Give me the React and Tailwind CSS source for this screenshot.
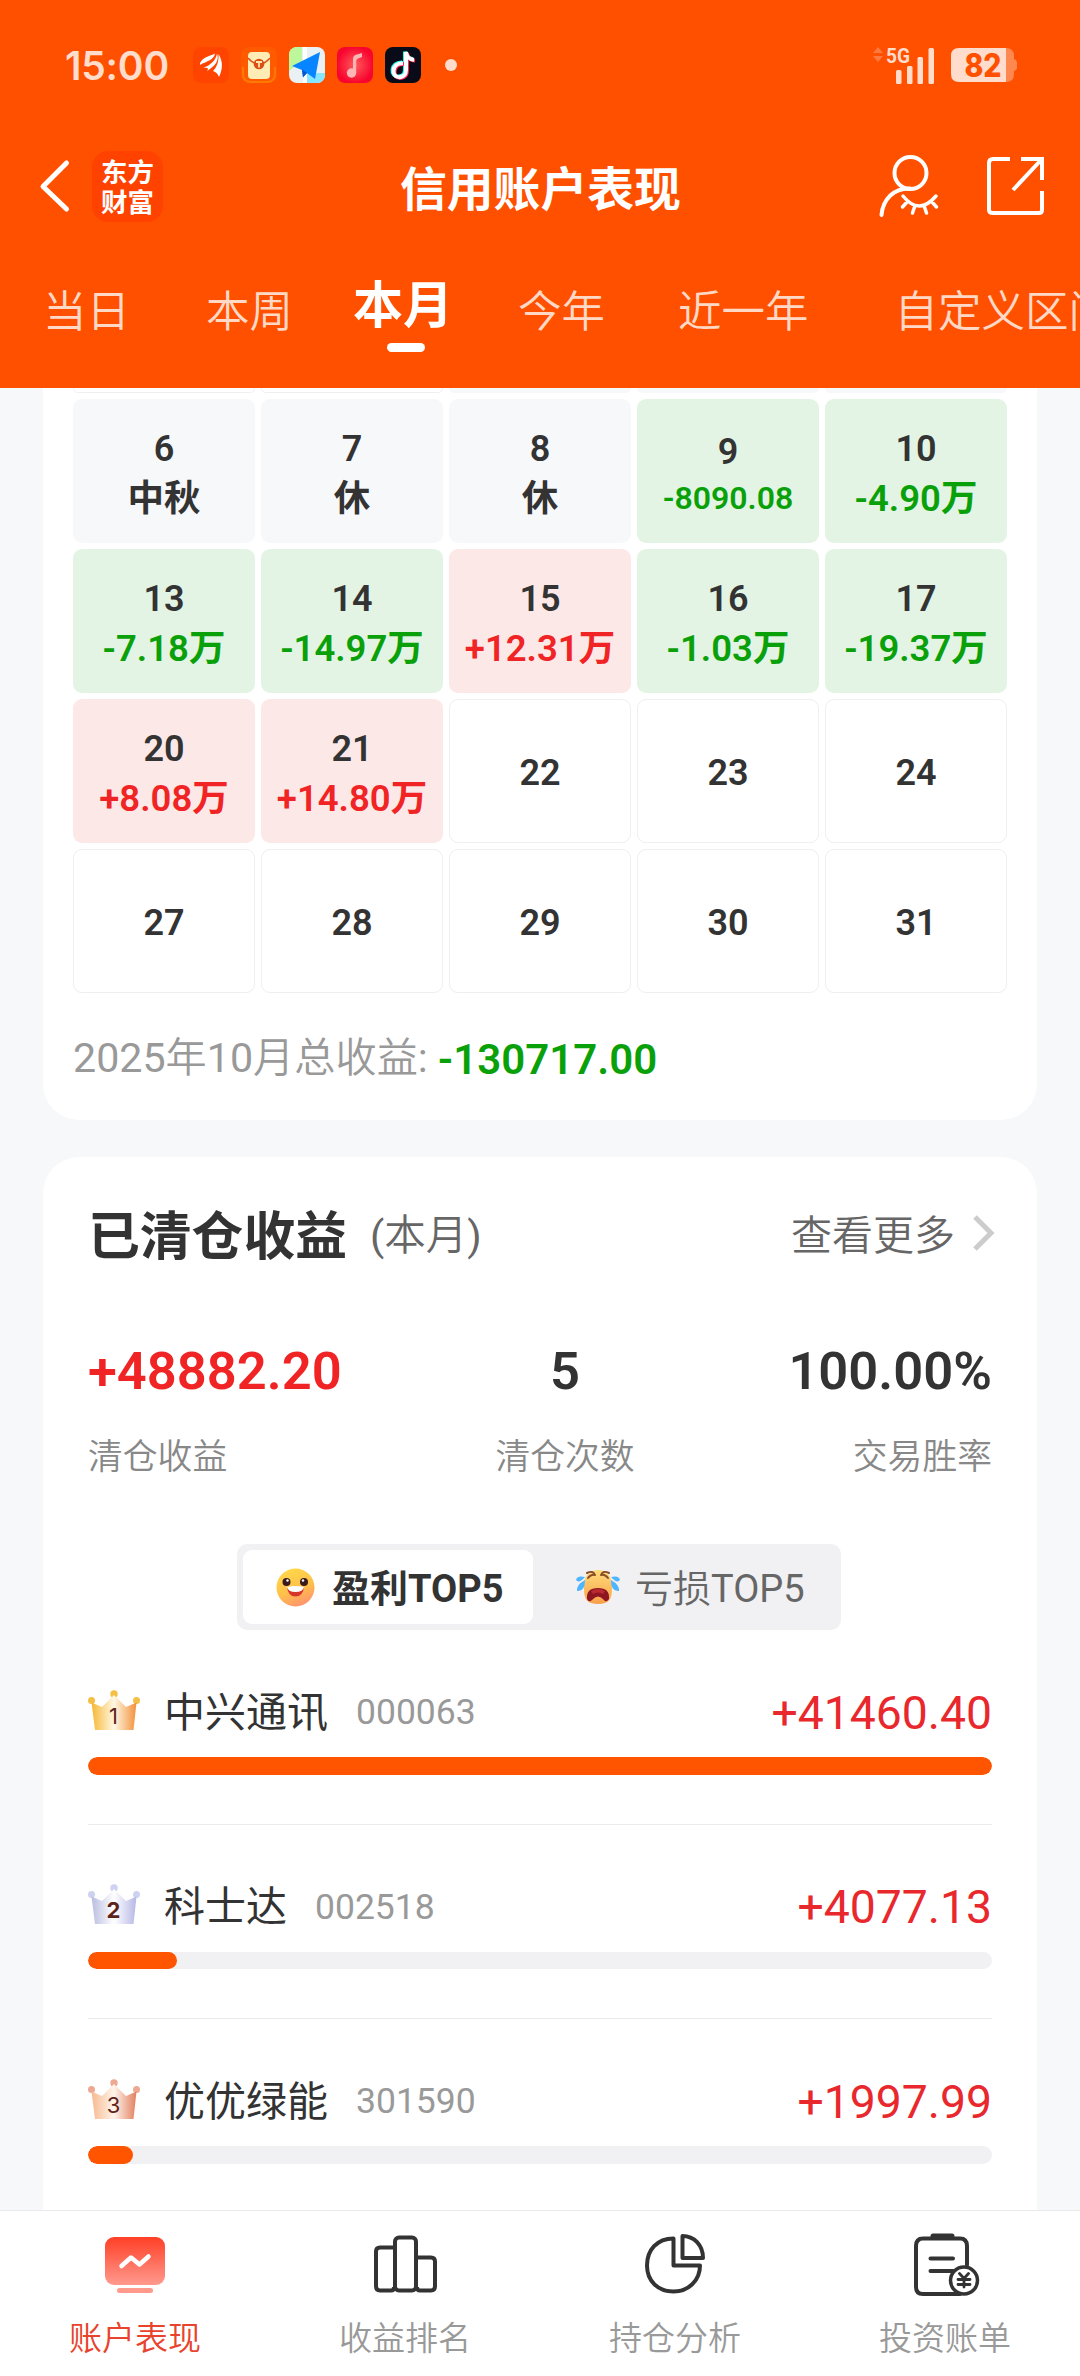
const FONT = "font-['Roboto','Noto_Sans_CJK_SC',sans-serif]";

const plain = "bg-[#f7f8fa] text-[#333]";
const green = "bg-[#e3f4e5] text-[#0aa00a]";
const red = "bg-[#fde8e8] text-[#f02424]";
const empty = "bg-white border border-[#efefef] text-[#333]";

const days = [
  { d: "6", v: "中秋", c: plain },
  { d: "7", v: "休", c: plain },
  { d: "8", v: "休", c: plain },
  { d: "9", v: "-8090.08", c: green, small: true },
  { d: "10", v: "-4.90万", c: green },
  { d: "13", v: "-7.18万", c: green },
  { d: "14", v: "-14.97万", c: green },
  { d: "15", v: "+12.31万", c: red },
  { d: "16", v: "-1.03万", c: green },
  { d: "17", v: "-19.37万", c: green },
  { d: "20", v: "+8.08万", c: red },
  { d: "21", v: "+14.80万", c: red },
  ...["22", "23", "24", "27", "28", "29", "30", "31"].map((d) => ({ d, c: empty })),
];

function DayCell({ day }) {
  return (
    <div className={`flex h-[144px] flex-col items-center justify-center rounded-[9px] font-semibold ${day.small ? "pt-[2px]" : "pt-[5px]"} ${day.c}`}>
      <span className={`text-[36px] text-[#333] ${day.small ? "mt-[5px] leading-[46px]" : "leading-[49px]"}`}>{day.d}</span>
      {day.v && (
        <span className={`whitespace-nowrap ${day.small ? "text-[32px] leading-[46px]" : "text-[36.500px] leading-[49px]"}`}>{day.v}</span>
      )}
    </div>
  );
}

function StatusBar() {
  return (
    <div className="flex h-[130px] items-center pl-[65px] pr-[63px]">
      <span className="w-[128px] font-['Inter',sans-serif] text-[39px] leading-none font-semibold tracking-[-0.2px] text-[#ffdccb]">15:00</span>
      <div className="flex items-center gap-[12px]">
        <svg width="36" height="36" viewBox="0 0 36 36">
          <rect width="36" height="36" rx="8" fill="#ff4400" />
          <g fill="#fff">
            <path d="M7 16C10 10 17 9 22 6.500C21 13 14 14 7 18Z" />
            <path d="M10 21C18 18 23 13 24 6.500C27 15 20 20 14 24C16 21 15 20 10 21Z" />
            <path d="M20 24C24 20 26 14 25.500 7C30 14 30 22 26 30C25 27 23 25 20 24Z" />
          </g>
        </svg>
        <svg width="36" height="36" viewBox="0 0 36 36">
          <rect width="36" height="36" rx="8" fill="#ff5a00" />
          <path d="M2 20V27Q2 34 9 35H27Q34 34 34 27V20" fill="none" stroke="#ff7a00" strokeWidth="2" />
          <rect x="7" y="5" width="22" height="27" rx="4" fill="#ffedb5" />
          <path d="M7 11Q12 17 18 17Q24 17 29 11" fill="none" stroke="#d9541a" strokeWidth="1.500" />
          <circle cx="18" cy="17" r="5.300" fill="#dd4e14" />
          <path d="M15 15H21M18 15V20.500" stroke="#ffe6a8" strokeWidth="1.800" />
        </svg>
        <svg width="36" height="36" viewBox="0 0 36 36">
          <clipPath id="mapclip"><rect width="36" height="36" rx="8" /></clipPath>
          <g clipPath="url(#mapclip)">
            <rect width="36" height="36" fill="#e9f1f4" />
            <path d="M0 0H13V14L0 24Z" fill="#bdf79c" />
            <path d="M16 0V36" stroke="#fff" strokeWidth="4" />
            <path d="M18 26H36V36H18Z" fill="#86e6ff" />
            <path d="M3 19L31 5L26 32L18 26L14 30L13 23Z" fill="#0784ff" />
            <path d="M13 22.500L18 26L14 30.500Z" fill="#0657c8" />
          </g>
        </svg>
        <svg width="36" height="36" viewBox="0 0 36 36">
          <defs>
            <radialGradient id="music"><stop stopColor="#ff5c5c" /><stop offset="1" stopColor="#f8052f" /></radialGradient>
          </defs>
          <rect width="36" height="36" rx="8" fill="url(#music)" />
          <g fill="#ffb5b5">
            <circle cx="14.500" cy="26" r="4.700" />
            <path d="M16 25V12Q16 8 20 7.500L25 6V10L21 11.500Q19.200 12 19.200 14V26Z" />
          </g>
        </svg>
        <svg width="36" height="36" viewBox="0 0 36 36">
          <rect width="36" height="36" rx="8" fill="#090b18" />
          <g fill="none" strokeWidth="4">
            <path d="M17 15.500C5 15 5 30 13.500 29.500C19 29 20 26 20 22V4.500C20.500 9 24 12 28 12" stroke="#25f4ee" />
            <path d="M19 17C7 16.500 7 31.500 15.500 31C21 30.500 22 27.500 22 23.500V6C22.500 10.500 26 13.500 30 13.500" stroke="#fe2c55" />
            <path d="M18 16.200C6 15.700 6 30.700 14.500 30.200C20 29.700 21 26.700 21 22.700V5C21.500 9.700 25 12.700 29 12.700" stroke="#fff" />
          </g>
        </svg>
      </div>
      <span className="ml-[24px] size-[12px] rounded-full bg-[#ffdccb]" />
      <svg className="ml-auto overflow-visible" width="62" height="38" viewBox="0 0 62 38">
        <path d="M0 7L5 1L10 7ZM0 10L5 16L10 10Z" fill="#ff7a40" />
        <text x="13" y="17" fill="#ffdccb" fontSize="21" fontWeight="700" fontFamily="Roboto" textLength="24" lengthAdjust="spacingAndGlyphs">5G</text>
        <g fill="#ffdccb">
          <rect x="23" y="24" width="5.500" height="14" rx="1.500" />
          <rect x="34" y="20" width="5.500" height="18" rx="1.500" />
          <rect x="44.500" y="11" width="5.500" height="27" rx="1.500" />
          <rect x="55.500" y="2" width="5.500" height="36" rx="1.500" />
        </g>
      </svg>
      <svg className="ml-[16px] overflow-visible" width="66" height="34" viewBox="0 0 66 34">
        <path d="M55 0Q63 0 63 8V11Q66 12 66 15V20Q66 22 63 23V26Q63 34 55 34Z" fill="#ff8850" />
        <path d="M8 0H55V34H8Q0 34 0 26V8Q0 0 8 0Z" fill="#ffdccb" />
        <text x="13.500" y="29" fill="#ff5000" fontSize="32" fontWeight="800" fontFamily="Inter" textLength="37" lengthAdjust="spacingAndGlyphs">82</text>
      </svg>
    </div>
  );
}

function TitleBar() {
  return (
    <div className="flex h-[112px] items-center pl-[38px] pr-[34px]">
      <svg width="34" height="54" viewBox="0 0 34 54" fill="none" stroke="#fff" strokeWidth="5" strokeLinecap="round" strokeLinejoin="round">
        <path d="M28.500 4L5 27.500L28.500 50" />
      </svg>
      <div className="ml-[20px] flex size-[71px] flex-col items-center justify-center rounded-[16px] bg-[#ff4200] font-['Noto_Sans_CJK_SC',sans-serif] text-[26.500px] leading-[30px] font-bold text-white">
        <span>东方</span>
        <span>财富</span>
      </div>
      <h1 className="ml-[237px] pt-[8px] text-[46.800px] leading-none font-bold text-white">信用账户表现</h1>
      <svg className="ml-auto" width="62" height="64" viewBox="0 0 62 64" fill="none" stroke="#fff" strokeWidth="4" strokeLinecap="round">
        <circle cx="32.500" cy="19" r="16" />
        <path d="M3.500 61C5 45 16 34 32 34.500" />
        <path d="M25 42Q41 62 58 42M29 48L24.500 53M36.500 53L34.500 59M46.500 53L48.500 59M54 48L58.500 53" strokeWidth="3.500" />
      </svg>
      <svg className="ml-[46px]" width="60" height="60" viewBox="0 0 60 60" fill="none" stroke="#fff" strokeWidth="4">
        <path d="M24 3H7Q3 3 3 7V54Q3 57 7 57H53Q56 57 56 54V35M35 3H56V24M56 3L27 34" />
      </svg>
    </div>
  );
}

const tabBase = "shrink-0 text-[43.500px] leading-[60px] text-[#ffd9c6] font-[350]";

function Tabs() {
  return (
    <div className="flex h-[146px] items-start overflow-hidden pt-[41px] pl-[43px] whitespace-nowrap">
      <span className={tabBase}>当日</span>
      <span className={`${tabBase} ml-[76px]`}>本周</span>
      <div className="-mt-[7px] ml-[60px] flex shrink-0 flex-col items-center">
        <span className="text-[50px] leading-[60px] font-bold text-white">本月</span>
        <span className="mt-[7px] ml-[6px] h-[9px] w-[38px] rounded-full bg-white" />
      </div>
      <span className={`${tabBase} ml-[65px]`}>今年</span>
      <span className={`${tabBase} ml-[73px]`}>近一年</span>
      <span className={`${tabBase} ml-[86px]`}>自定义区间</span>
    </div>
  );
}

function Calendar() {
  return (
    <section className="rounded-b-[36px] bg-white px-[30px] pb-[35px]">
      <div className="mb-[6px] grid grid-cols-5 gap-x-[6px]">
        <div className="h-[5px] rounded-b-[9px] border border-t-0 border-[#efefef]" />
        <div className="h-[5px] rounded-b-[9px] border border-t-0 border-[#efefef]" />
        <div className="h-[5px] rounded-b-[9px] bg-[#f7f8fa]" />
        <div className="h-[5px] rounded-b-[9px] bg-[#f7f8fa]" />
        <div className="h-[5px] rounded-b-[9px] bg-[#f7f8fa]" />
      </div>
      <div className="grid grid-cols-5 gap-[6px]">
        {days.map((day) => (
          <DayCell key={day.d} day={day} />
        ))}
      </div>
      <p className="mt-[41px] mb-[1px] flex h-[50px] items-center text-[41.200px] whitespace-nowrap text-[#999]">
        <span>2025</span>
        <span className="font-[350]">年</span>
        <span>10</span>
        <span className="font-[350]">月总收益</span>
        <span>:</span>
        <b className="ml-[10px] text-[42px] font-semibold text-[#0aa00a]">-130717.00</b>
      </p>
    </section>
  );
}

function Happy() {
  return (
    <svg width="39" height="39" viewBox="0 0 39 39">
      <defs>
        <linearGradient id="happy" x1="0.300" y1="0" x2="0.700" y2="1"><stop stopColor="#ffd84a" /><stop offset="0.550" stopColor="#ffc04a" /><stop offset="1" stopColor="#ff9070" /></linearGradient>
      </defs>
      <circle cx="19.500" cy="19.500" r="19" fill="url(#happy)" />
      <circle cx="10.500" cy="14" r="4" fill="#3a1a1c" />
      <circle cx="28" cy="14" r="4" fill="#3a1a1c" />
      <circle cx="11.500" cy="12.500" r="1.200" fill="#fff" />
      <circle cx="27" cy="12.500" r="1.200" fill="#fff" />
      <path d="M11 19Q19.500 23 28 19Q27 28.500 19.500 28.500Q12 28.500 11 19Z" fill="#d8352a" />
      <path d="M11 19Q19.500 17 28 19Q27 24 19.500 24Q12 24 11 19Z" fill="#fff" />
    </svg>
  );
}

function Crying() {
  return (
    <svg width="44" height="36" viewBox="0 0 44 36">
      <defs>
        <linearGradient id="cry" x1="0" y1="0" x2="0" y2="1"><stop stopColor="#ffdc7a" /><stop offset="1" stopColor="#f8a04c" /></linearGradient>
      </defs>
      <path d="M22 1C32 1 37 9 36 20C36 30 33 35 22 35C11 35 8 30 8 20C7 9 12 1 22 1Z" fill="url(#cry)" />
      <path d="M11 4Q17 1 19 6M12 9Q15 5 19 6M33 4Q27 1 25 6M32 9Q29 5 25 6" fill="none" stroke="#8a4d28" strokeWidth="2" strokeLinecap="round" />
      <path d="M11 30Q10 19 22 19Q34 19 33 30Q30 34 28 31Q22 24 16 31Q13 34 11 30Z" fill="#8d1620" />
      <path d="M15 22Q22 18 29 22L27 25Q22 22 17 25Z" fill="#b92b30" />
      <g fill="#4fb5ff">
        <path d="M9 8Q1 6 0 11Q3 15 9 8Z" />
        <path d="M9 11Q0 16 1 22Q9 23 9 11Z" />
        <path d="M35 8Q43 6 44 11Q41 15 35 8Z" />
        <path d="M35 11Q44 16 43 22Q35 23 35 11Z" />
      </g>
    </svg>
  );
}

const crownStops = [
  ["#f7b733", "#fff8e4", "#f2903a", "#f5bf45"],
  ["#b9bde0", "#ffffff", "#b6b7e6", "#cdd2f2"],
  ["#f7b98f", "#fff4ec", "#e2805f", "#eda892"],
];

function Crown({ n }) {
  const [a, b, c, dot] = crownStops[n - 1];
  return (
    <svg className="-mt-[4px]" width="52" height="41" viewBox="0 0 52 41">
      <defs>
        <linearGradient id={`crown${n}`}><stop stopColor={a} /><stop offset="0.500" stopColor={b} /><stop offset="1" stopColor={c} /></linearGradient>
      </defs>
      <circle cx="26" cy="4" r="3.700" fill={dot} />
      <circle cx="3.500" cy="10.500" r="3.500" fill={dot} />
      <circle cx="48.500" cy="10.500" r="3.500" fill={dot} />
      <path d="M3.500 12.500L14 17L26 5L38 17L48.500 12.500L45.500 40H7Z" fill={`url(#crown${n})`} />
      <text x="25.500" y="34" textAnchor="middle" fill="#5d231b" fontFamily="Inter" fontSize="22" fontWeight={n === 2 ? 700 : 400}>{n}</text>
    </svg>
  );
}

const stocks = [
  { name: "中兴通讯", code: "000063", value: "+41460.40", pct: 100 },
  { name: "科士达", code: "002518", value: "+4077.13", pct: 9.85 },
  { name: "优优绿能", code: "301590", value: "+1997.99", pct: 5 },
];

function StockRow({ stock, n }) {
  return (
    <li className="h-[142.500px] border-b-[1.500px] border-[#ececee] last:border-0">
      <div className="flex h-[60px] items-center">
        <Crown n={n} />
        <span className="ml-[24px] pt-[1px] text-[41px] leading-[60px] text-[#333]">{stock.name}</span>
        <span className="ml-[28px] text-[35.500px] leading-[60px] text-[#999]">{stock.code}</span>
        <span className="ml-auto pt-[1px] text-[46.300px] leading-[60px] text-[#e8282c]">{stock.value}</span>
      </div>
      <div className="mt-[15px] h-[17.500px] overflow-hidden rounded-full bg-[#f1f1f3]">
        <div className="h-full rounded-full bg-[#ff5500]" style={{ width: `${stock.pct}%` }} />
      </div>
    </li>
  );
}

function Stat({ value, label, color, align }) {
  return (
    <div className={`flex flex-col ${align}`}>
      <span className={`text-[52.500px] leading-[60px] font-semibold ${color}`}>{value}</span>
      <span className="mt-[31px] text-[34.800px] leading-[50px] font-[350] text-[#888]">{label}</span>
    </div>
  );
}

function Cleared() {
  return (
    <section className="mt-[37px] h-[1100px] rounded-t-[36px] bg-white px-[45px] pt-[48px]">
      <div className="flex h-[60px] items-center">
        <h2 className="pt-[6px] text-[51.800px] leading-none font-bold text-[#333]">已清仓收益</h2>
        <span className="ml-[23px] pt-[2px] text-[41.500px] leading-none text-[#666]">
          (<span className="font-[350]">本月</span>)
        </span>
        <span className="ml-auto pt-[3px] text-[41px] leading-none font-[350] text-[#666]">查看更多</span>
        <svg className="mr-[-3px] ml-[17px] -mt-[4px]" width="23" height="38" viewBox="0 0 23 38" fill="none" stroke="#ccc" strokeWidth="5">
          <path d="M3 3L19 19L3 35" />
        </svg>
      </div>
      <div className="mt-[76px] grid grid-cols-[1fr_140px_1fr]">
        <Stat value="+48882.20" label="清仓收益" color="text-[#f02424]" align="items-start" />
        <div className="ml-[25px] w-[140px]">
          <Stat value="5" label="清仓次数" color="text-[#333]" align="items-center" />
        </div>
        <Stat value="100.00%" label="交易胜率" color="text-[#333]" align="items-end" />
      </div>
      <div className="mt-[62px] ml-[149px] flex h-[86px] w-[604px] items-center rounded-[10px] bg-[#f1f1f3] p-[6px]">
        <div className="flex h-[74px] w-[290px] items-center rounded-[9px] bg-white pl-[33px]">
          <Happy />
          <span className="ml-[17px] pt-[3px] text-[38px] leading-none font-bold text-[#333]">盈利TOP5</span>
        </div>
        <div className="flex items-center pl-[43px]">
          <Crying />
          <span className="ml-[15px] pt-[3px] text-[38px] leading-none text-[#666]">
            <span className="font-[350]">亏损</span>TOP5
          </span>
        </div>
      </div>
      <ul className="mt-[52px] flex flex-col gap-[52px]">
        {stocks.map((s, i) => (
          <StockRow key={s.code} stock={s} n={i + 1} />
        ))}
      </ul>
    </section>
  );
}

const navItems = [
  {
    label: "账户表现",
    active: true,
    icon: (
      <>
        <defs>
          <linearGradient id="nav" x1="0" y1="0" x2="0" y2="1"><stop stopColor="#ff3f26" /><stop offset="1" stopColor="#ff9a8e" /></linearGradient>
        </defs>
        <rect x="5" y="5" width="60" height="48" rx="9" fill="url(#nav)" />
        <rect x="17" y="56" width="36" height="5" rx="2.500" fill="#ff9a8c" />
        <path d="M21.500 34L31 25.500L39.500 32.500L48.500 24.500" fill="none" stroke="#fff" strokeWidth="4.500" strokeLinecap="round" strokeLinejoin="round" />
      </>
    ),
  },
  {
    label: "收益排名",
    icon: (
      <g fill="none" stroke="#333" strokeWidth="4">
        <path d="M24 15.500H10Q6 15.500 6 19.500V54Q6 58.500 10 58.500H21Q24 58.500 24 55" />
        <rect x="25" y="5.500" width="21" height="53" rx="4" />
        <path d="M47 25.500H61Q65 25.500 65 29.500V54Q65 58.500 61 58.500H50Q47 58.500 47 55" />
      </g>
    ),
  },
  {
    label: "持仓分析",
    icon: (
      <g fill="none" stroke="#333" strokeWidth="4" strokeLinejoin="round">
        <path d="M33.500 6.500C17 6.500 7 18 7 33.500C7 49 18 59.500 33.500 59.500C49 59.500 60 48 60 33.500H33.500Z" />
        <path d="M42.500 4V26H63C63 13 54 4 42.500 4Z" />
      </g>
    ),
  },
  {
    label: "投资账单",
    icon: (
      <g fill="none" stroke="#333" strokeWidth="4" strokeLinecap="round">
        <path d="M23 4H42" strokeWidth="5" />
        <path d="M57 33V14Q57 6.500 50 6.500H13Q6 6.500 6 14V55Q6 62 13 62H50M20.500 26.500H43M20.500 39H43" />
        <circle cx="54" cy="48.500" r="13.500" fill="#fff" strokeWidth="3.500" />
        <path d="M49.500 41.500L54 46.500L58.500 41.500M54 47V55M48 47.500H60M48 52.500H60" strokeWidth="2.800" />
      </g>
    ),
  },
];

function BottomNav() {
  return (
    <nav className="grid h-[166px] grid-cols-4 border-t border-[#e9eaec] bg-white">
      {navItems.map((item) => (
        <div key={item.label} className="flex flex-col items-center pt-[21px]">
          <svg width="70" height="66" viewBox="0 0 70 66">{item.icon}</svg>
          <span className={`mt-[19px] text-[33px] leading-[44px] font-[350] ${item.active ? "text-[#e8432c]" : "text-[#999]"}`}>{item.label}</span>
        </div>
      ))}
    </nav>
  );
}

export default function App() {
  return (
    <div className={`flex h-[2376px] w-[1080px] flex-col overflow-hidden bg-[#f7f8fa] ${FONT}`}>
      <header className="h-[388px] shrink-0 bg-[#ff5000]">
        <StatusBar />
        <TitleBar />
        <Tabs />
      </header>
      <main className="h-[1822px] shrink-0 overflow-hidden px-[43px]">
        <Calendar />
        <Cleared />
      </main>
      <BottomNav />
    </div>
  );
}
